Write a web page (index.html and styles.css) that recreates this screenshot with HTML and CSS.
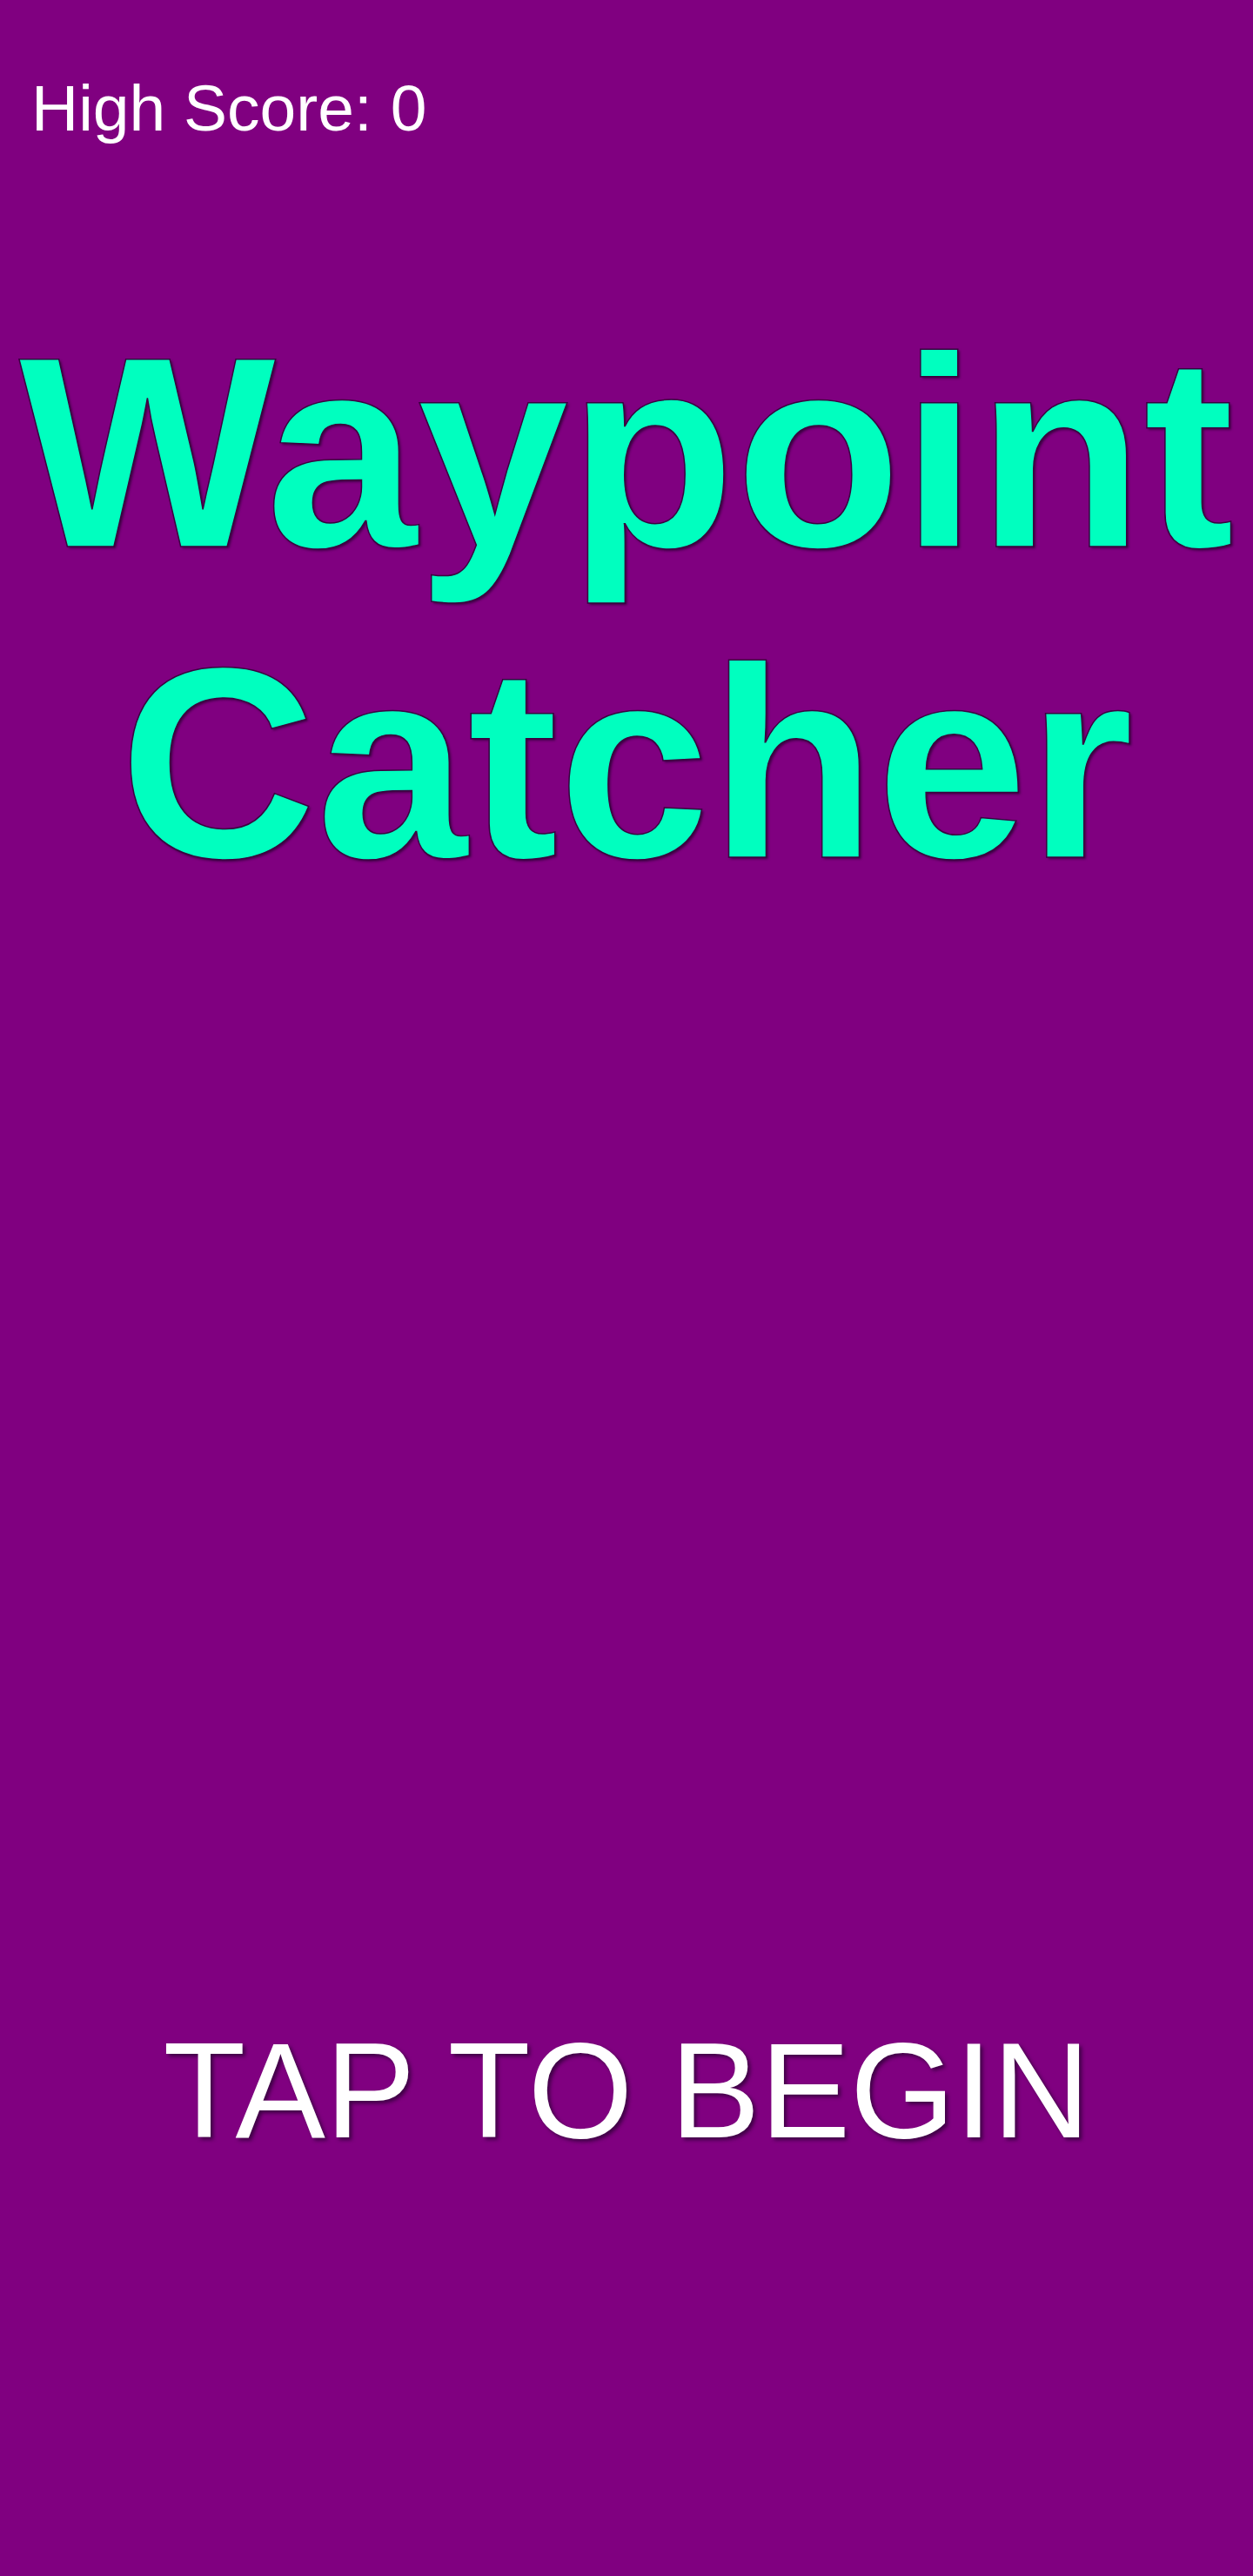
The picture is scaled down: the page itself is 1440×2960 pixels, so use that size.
FILE: index.html
```html
<!DOCTYPE html>
<html lang="en">
<head>
<meta charset="utf-8">
<title>Waypoint Catcher</title>
<link rel="stylesheet" href="styles.css">
</head>
<body>
<main class="screen">
  <div class="high-score">High Score: 0</div>
  <h1 class="title">Waypoint<br>Catcher</h1>
  <div class="prompt">TAP TO BEGIN</div>
</main>
</body>
</html>
```
FILE: styles.css
```css
html, body {
  margin: 0;
  padding: 0;
  background: #800080;
}
.screen {
  width: 1440px;
  height: 2960px;
  display: flex;
  flex-direction: column;
  font-family: "Liberation Sans", Arial, sans-serif;
  background: #800080;
  overflow: hidden;
}
.high-score {
  padding: 86px 0 0 36px;
  font-size: 75px;
  line-height: 76px;
  color: #ffffff;
}
.title {
  margin: 179px 0 0 0;
  font-size: 313px;
  line-height: 357px;
  font-weight: 700;
  text-align: center;
  color: #00ffbf;
  -webkit-text-stroke: 1.5px #3a0040;
  text-shadow: 2px 2px 3px rgba(30, 0, 40, 0.7);
}
.prompt {
  margin-top: 1270px;
  font-size: 155px;
  line-height: 156px;
  text-align: center;
  color: #ffffff;
  text-shadow: 3px 3px 4px rgba(40, 0, 50, 0.75);
}
```
